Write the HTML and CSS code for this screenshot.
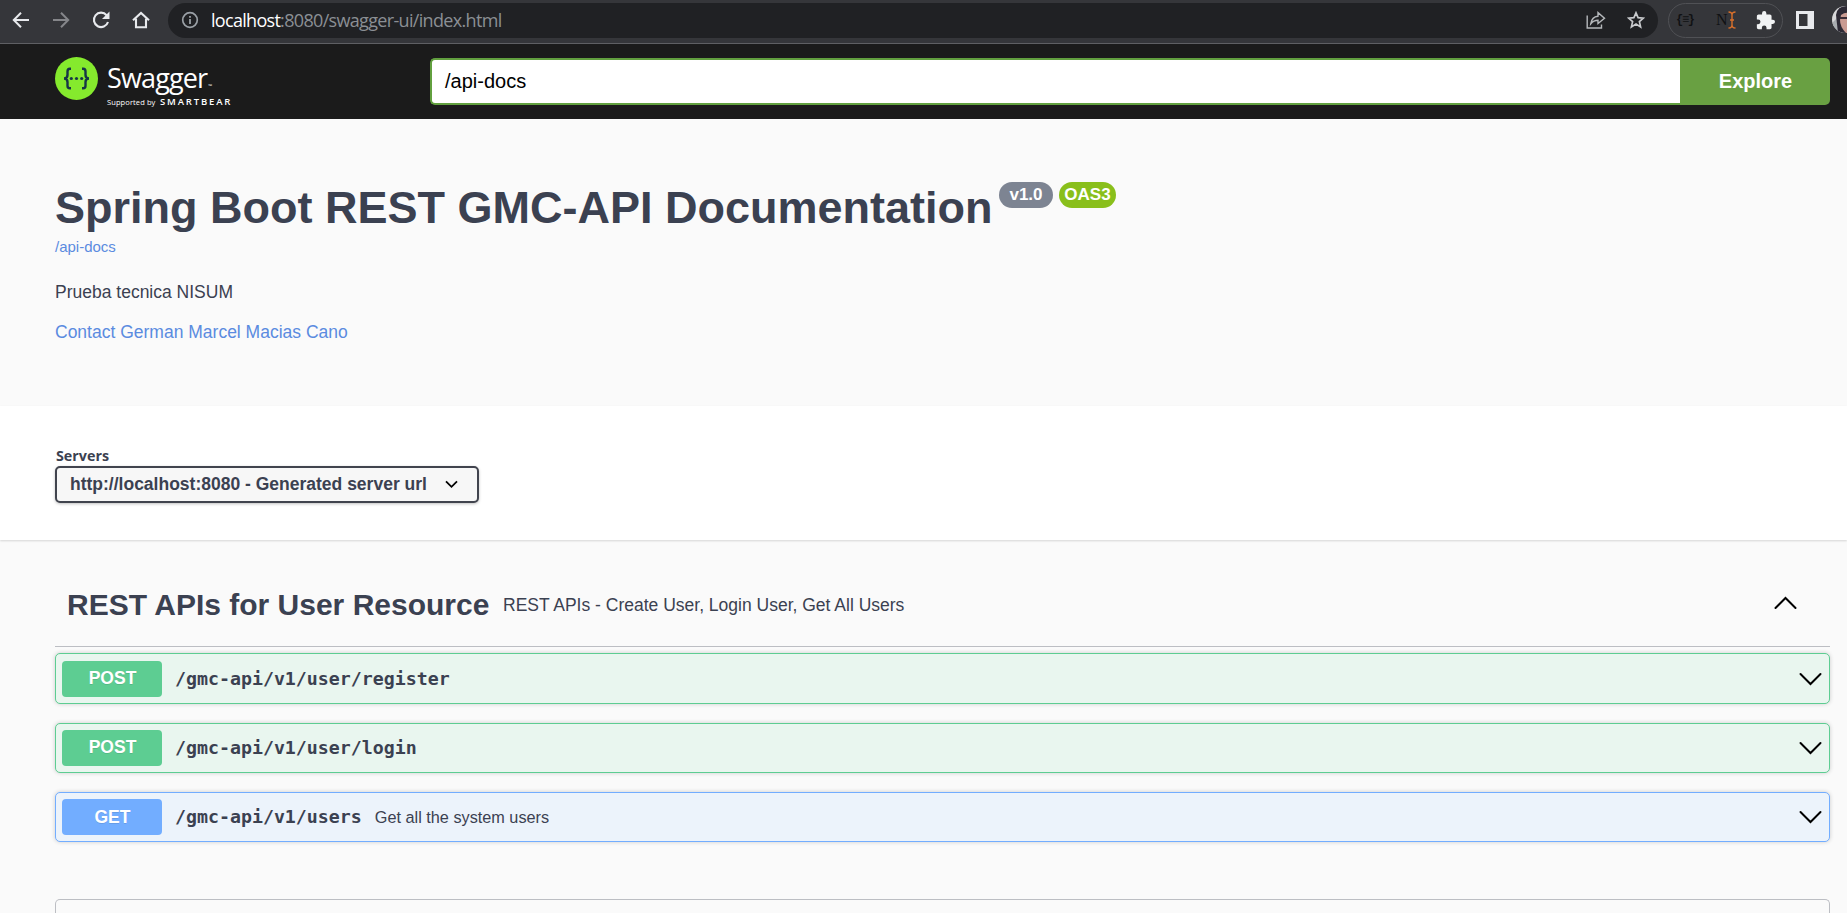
FILE: index.html
```html
<!DOCTYPE html>
<html lang="en">
<head>
<meta charset="utf-8">
<title>Swagger UI</title>
<link rel="stylesheet" href="styles.css">
</head>
<body>
<div class="chrome">
  <div class="nav">
    <svg width="18" height="18" viewBox="0 0 18 18"><path d="M17 9H2M9 1.8L1.8 9L9 16.2" fill="none" stroke="#e8eaed" stroke-width="2"/></svg>
    <svg width="18" height="18" viewBox="0 0 18 18"><path d="M1 9H16M9 1.8L16.2 9L9 16.2" fill="none" stroke="#85868a" stroke-width="2"/></svg>
    <svg width="18" height="18" viewBox="0 0 18 18"><path d="M14.6 4.2A7.2 7.2 0 1 0 16 11" fill="none" stroke="#e8eaed" stroke-width="2.1"/><path d="M17.5 .5V8H10Z" fill="#e8eaed"/></svg>
    <svg width="18" height="18" viewBox="0 0 18 18"><path d="M1 9.3L9 2L17 9.3M4 7.8V16.2H14V7.8" fill="none" stroke="#e8eaed" stroke-width="2.1"/></svg>
  </div>
  <div class="omnibox">
    <svg class="info-icon" width="18" height="18" viewBox="0 0 18 18"><circle cx="9" cy="9" r="7.3" fill="none" stroke="#9aa0a6" stroke-width="1.7"/><path d="M9 8V13M9 5V6.8" stroke="#9aa0a6" stroke-width="1.8"/></svg>
    <span class="url"><span class="host">localhost</span><span class="rest">:8080/swagger-ui/index.html</span></span>
    <svg class="share" width="20" height="18" viewBox="0 0 20 18"><path d="M1.2 4.5V17H15.5V13.5M4.8 12.7C5.5 8 8 5.5 12 5.2V1.6L18.5 7.2L12 12.6V9.2C9 9.2 6.8 10.2 4.8 12.7Z" fill="none" stroke="#b5b8bb" stroke-width="1.4"/></svg>
    <svg class="star" width="18" height="18" viewBox="0 0 18 18"><path d="M9 1.8L11.1 6.6L16.4 7.1L12.4 10.6L13.6 15.9L9 13.1L4.4 15.9L5.6 10.6L1.6 7.1L6.9 6.6Z" fill="none" stroke="#c8cacd" stroke-width="1.7"/></svg>
  </div>
  <div class="extensions">
    <span class="ext-json">{≡}</span>
    <span class="ext-n">N<svg width="8" height="18" viewBox="0 0 8 18"><path d="M.5 1Q4 1 4 4V14Q4 17 .5 17M7.5 1Q4 1 4 4M7.5 17Q4 17 4 14M2 9H6" fill="none" stroke="#d9702b" stroke-width="1.4"/></svg></span>
    <svg class="puzzle" width="19" height="19" viewBox="1.5 1 21 22"><path fill="#f1f3f4" d="M20.5 11H19V7c0-1.1-.9-2-2-2h-4V3.500a2.500 2.500 0 0 0-5 0V5H4c-1.100 0-2 .9-2 2v3.800h1.500a2.700 2.700 0 0 1 0 5.400H2V20c0 1.100.9 2 2 2h3.800v-1.500a2.700 2.700 0 0 1 5.400 0V22H17c1.100 0 2-.9 2-2v-4h1.500a2.500 2.500 0 0 0 0-5z"/></svg>
  </div>
  <svg class="panel" width="18" height="18" viewBox="0 0 18 18"><rect width="18" height="18" fill="#e8eaed"/><rect x="3" y="3" width="8.500" height="12" fill="#35363a"/></svg>
  <svg class="avatar" width="27" height="27" viewBox="0 0 27 27"><defs><clipPath id="face"><circle cx="13.500" cy="13.500" r="13.500"/></clipPath></defs><g clip-path="url(#face)"><rect width="27" height="27" fill="#d8d8da"/><path d="M0 17L5 12L7 20L12 27H3Z" fill="#a9adb0"/><path d="M6 27L4 9Q5 0 15 0H27V27Z" fill="#2d2a35"/><path d="M9 9Q14 5 20 8V27H14Q8 21 8 14Z" fill="#c99b92"/><path d="M8 12H16" stroke="#3a2c36" stroke-width="2"/></g></svg>
</div>

<header class="topbar">
  <div class="logo">
    <svg class="mark" width="43" height="43" viewBox="0 0 43 43"><circle cx="21.500" cy="21.500" r="21.500" fill="#85ea2d"/><path d="M16 11.800H14.800Q12.500 11.800 12.500 14.500V18Q12.500 21.500 9 21.500Q12.500 21.500 12.500 25V28.700Q12.500 31.300 14.800 31.300H16M27 11.800H28.200Q30.500 11.800 30.500 14.500V18Q30.500 21.500 34 21.500Q30.500 21.500 30.500 25V28.700Q30.500 31.300 28.200 31.300H27" fill="none" stroke="#173647" stroke-width="2.400"/><g fill="#173647"><circle cx="16.300" cy="21.500" r="1.600"/><circle cx="21.500" cy="21.500" r="1.600"/><circle cx="26.700" cy="21.500" r="1.600"/></g></svg>
    <div class="brand">
      <div class="brand-name">Swagger<span class="tm">™</span></div>
      <div class="brand-by"><span class="supported">Supported by</span><span class="smartbear">SMARTBEAR</span></div>
    </div>
  </div>
  <div class="search"><div class="field">/api-docs</div><div class="explore">Explore</div></div>
</header>

<section class="info">
  <div class="heading"><h1>Spring Boot REST GMC-API Documentation</h1><span class="version">v1.0</span><span class="version oas">OAS3</span></div>
  <a class="spec">/api-docs</a>
  <p class="about">Prueba tecnica NISUM</p>
  <a class="contact">Contact German Marcel Macias Cano</a>
</section>

<section class="servers">
  <div class="servers-label">Servers</div>
  <div class="select"><span>http://localhost:8080 - Generated server url</span><svg width="13" height="9" viewBox="0 0 13 9"><path d="M1 1.300L6.500 6.800L12 1.300" fill="none" stroke="#000" stroke-width="1.800"/></svg></div>
</section>

<main class="operations">
  <div class="tag">
    <h2>REST APIs for User Resource</h2><span class="tag-desc">REST APIs - Create User, Login User, Get All Users</span>
    <svg class="chevron" width="23" height="14" viewBox="0 0 23 14"><path d="M1.500 12L11.500 2L21.500 12" fill="none" stroke="#000" stroke-width="2" stroke-linecap="round"/></svg>
  </div>
  <div class="op post first"><span class="method">POST</span><span class="path">/gmc-api/v1/user/register</span>
    <svg class="chevron" width="23" height="14" viewBox="0 0 23 14"><path d="M1.500 2L11.500 12L21.500 2" fill="none" stroke="#000" stroke-width="2" stroke-linecap="round"/></svg></div>
  <div class="op post"><span class="method">POST</span><span class="path">/gmc-api/v1/user/login</span>
    <svg class="chevron" width="23" height="14" viewBox="0 0 23 14"><path d="M1.500 2L11.500 12L21.500 2" fill="none" stroke="#000" stroke-width="2" stroke-linecap="round"/></svg></div>
  <div class="op get"><span class="method">GET</span><span class="path">/gmc-api/v1/users</span><span class="summary">Get all the system users</span>
    <svg class="chevron" width="23" height="14" viewBox="0 0 23 14"><path d="M1.500 2L11.500 12L21.500 2" fill="none" stroke="#000" stroke-width="2" stroke-linecap="round"/></svg></div>
  <div class="models"></div>
</main>
</body>
</html>
```
FILE: styles.css
```css
* { box-sizing: border-box; }
body { margin: 0; height: 913px; overflow: hidden; background: #fafafa; color: #3b4151; font-family: "Liberation Sans", Arial, sans-serif; }
svg { display: block; flex: none; }
h1, h2, p { margin: 0; }
span, a, h1, h2 { white-space: nowrap; }

.chrome { display: flex; align-items: center; height: 44px; padding: 0 0 4px 12px; background: #35363a; border-bottom: 1px solid #5f6064; overflow: hidden; }
.nav { display: flex; gap: 22px; width: 156px; flex: none; }
.omnibox { display: flex; align-items: center; width: 1490px; height: 35px; margin-top: 1px; padding: 0 13px 0 13px; border-radius: 18px; background: #202124; flex: none; }
.url { margin-left: 12px; font: 18px/34px "Open Sans", "Noto Sans", sans-serif; color: #9aa0a6; }
.host { color: #fff; letter-spacing: -0.7px; }
.rest { letter-spacing: -0.670px; color: #8b8f94; }
.share { margin-left: auto; margin-right: 21px; }
.extensions { display: flex; align-items: center; width: 115px; height: 35px; margin: 1px 13px 0 10px; padding-left: 7px; border: 1px solid #505155; border-radius: 18px; flex: none; color: #101113; }
.ext-json { width: 40px; font: bold 12px/20px "Liberation Mono", monospace; letter-spacing: -1.300px; }
.ext-n { display: flex; align-items: center; width: 40px; font: 16px/20px "Liberation Serif", serif; }
.avatar { margin-left: 18px; }

.topbar { display: flex; height: 75px; padding: 13px 17px 0 55px; background: #1b1b1b; }
.logo { display: flex; width: 375px; }
.brand { margin-left: 9px; color: #fff; }
.brand-name { height: 40px; font: 27px/42px "Open Sans", sans-serif; letter-spacing: -0.850px; }
.tm { margin-left: 1px; font-size: 5px; letter-spacing: 0; }
.brand-by { display: flex; align-items: center; height: 10px; }
.supported { width: 53px; font: 7.500px/10px "Open Sans", sans-serif; letter-spacing: .1px; }
.smartbear { font: 600 9.500px/10px "Open Sans", sans-serif; letter-spacing: 1.850px; }
.search { display: flex; width: 1400px; height: 47px; margin-top: 1px; }
.field { width: 1250px; padding-left: 13px; border: 2px solid #62a03f; border-right: 0; border-radius: 5px 0 0 5px; background: #fff; color: #000; font-size: 20px; line-height: 43px; }
.explore { width: 150px; padding-left: 1px; border-radius: 0 5px 5px 0; background: #69a042; color: #fff; font-weight: bold; font-size: 20px; line-height: 46px; text-align: center; }

.info { height: 287px; padding: 62px 0 0 55px; }
.heading { display: flex; height: 56px; }
h1 { width: 944px; font-size: 45px; line-height: 54px; }
.version { width: 54px; height: 26px; margin: 1px 6px 0 0; border-radius: 13px; background: #7d8492; color: #fff; font-weight: bold; font-size: 17px; line-height: 25px; text-align: center; }
.oas { width: 57px; background: #89bf1b; }
.spec { display: block; font-size: 15px; line-height: 20px; color: #5a8be0; }
.about { margin-top: 24px; font-size: 17.500px; line-height: 22px; }
.contact { display: block; margin-top: 18px; font-size: 17.500px; line-height: 22px; color: #5a8be0; }

.servers { height: 134px; padding: 41px 0 0 55px; background: #fff; box-shadow: 0 1px 2px rgba(0,0,0,.15); }
.servers-label { padding-left: 1px; height: 19px; font: bold 14.300px/18px "Open Sans", sans-serif; }
.select { display: flex; align-items: center; justify-content: space-between; width: 424px; height: 37px; padding: 0 19px 1px 13px; border: 2px solid #41444e; border-radius: 5px; background: #f7f7f7; box-shadow: 0 1px 3px rgba(0,0,0,.25); font-weight: bold; font-size: 17.500px; }

.operations { padding: 0 17px 0 55px; }
.tag { display: flex; align-items: center; height: 107px; padding: 20px 33px 0 12px; border-bottom: 1px solid #bcbec3; }
h2 { width: 436px; padding-top: 4px; font-size: 30px; line-height: 36px; }
.tag-desc { padding-top: 4px; font-size: 17.500px; }
.chevron { margin-left: auto; }
.op { display: flex; align-items: center; height: 50px; margin-top: 19px; padding: 0 7px 0 6px; border: 1px solid; border-radius: 5px; box-shadow: 0 0 4px rgba(0,0,0,.19); }
.first { height: 51px; margin-top: 6px; }
.post { border-color: #5dcd92; background: #e9f6ef; }
.get { border-color: #72adff; background: #ecf3fb; }
.method { width: 100px; height: 36px; padding-left: 1px; border-radius: 4px; background: #5dcd92; color: #fff; text-align: center; font-weight: bold; font-size: 17.500px; line-height: 35px; text-shadow: 0 1px 0 rgba(0,0,0,.1); }
.get .method { background: #72adff; line-height: 36px; }
.path { margin-left: 13px; font: bold 18.250px/24px "DejaVu Sans Mono", monospace; }
.summary { margin-left: 13px; font-size: 16.250px; }
.models { height: 14px; margin-top: 57px; border: 1px solid #bcbec3; border-bottom: 0; border-radius: 5px 5px 0 0; }
```
